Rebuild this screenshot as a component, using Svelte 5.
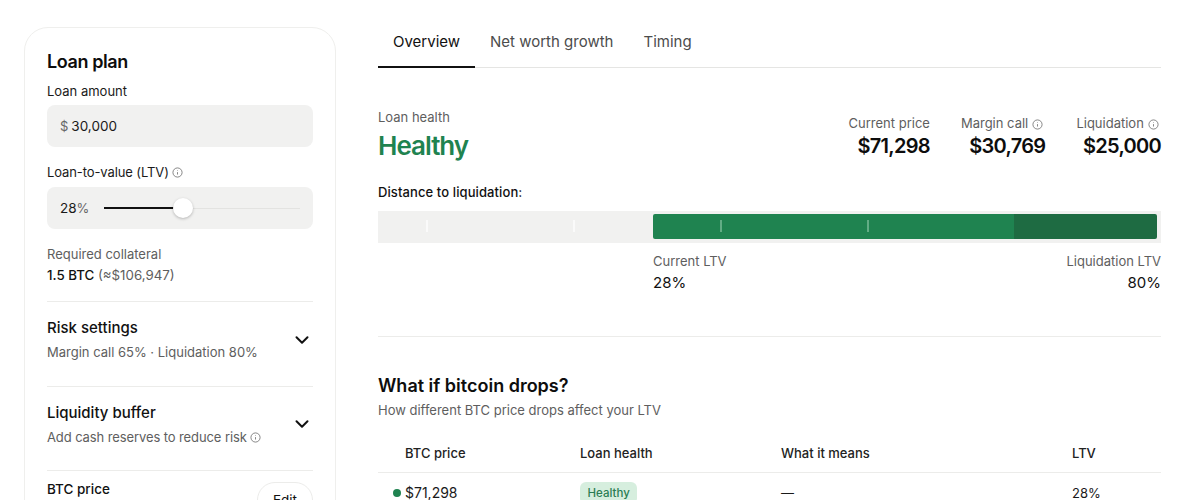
<script>
  const tabs = ["Overview", "Net worth growth", "Timing"];
  const stats = [
    { label: "Current price", value: "$71,298", info: false },
    { label: "Margin call", value: "$30,769", info: true },
    { label: "Liquidation", value: "$25,000", info: true },
  ];
</script>

{#snippet info(size)}
  <svg class="info" width={size} height={size} viewBox="0 0 12 12" fill="none" stroke="currentColor">
    <circle cx="6" cy="6" r="5" stroke-width="0.9" />
    <path d="M6 5.6v2.6M6 3.7v.6" stroke-width="0.9" />
  </svg>
{/snippet}

{#snippet chevron()}
  <svg class="chev" width="16" height="16" viewBox="0 0 16 16" fill="none">
    <path d="M2.5 5.2 8 10.7l5.5-5.5" stroke="#111" stroke-width="2" stroke-linecap="round" stroke-linejoin="round" />
  </svg>
{/snippet}

<div class="page">
  <aside class="card">
    <h2>Loan plan</h2>
    <div class="label first">Loan amount</div>
    <div class="field"><span class="unit">$</span> 30,000</div>

    <div class="label ltv">Loan-to-value (LTV) {@render info(11)}</div>
    <div class="field slider">
      <span class="pct">28<span class="unit">%</span></span>
      <div class="track">
        <div class="fill"></div>
        <div class="thumb"></div>
      </div>
    </div>

    <div class="collateral">
      <div class="muted">Required collateral</div>
      <div class="amount"><b>1.5 BTC</b> <span class="muted">(≈$106,947)</span></div>
    </div>

    <div class="row">
      <div>
        <div class="row-title">Risk settings</div>
        <div class="muted">Margin call 65% · Liquidation 80%</div>
      </div>
      {@render chevron()}
    </div>
    <div class="row">
      <div>
        <div class="row-title">Liquidity buffer</div>
        <div class="muted tight">Add cash reserves to reduce risk {@render info(11)}</div>
      </div>
      {@render chevron()}
    </div>
    <div class="price-row">
      <b>BTC price</b>
      <button>Edit</button>
    </div>
  </aside>

  <main>
    <nav>
      {#each tabs as tab, i}
        <div class="tab" class:active={i === 0}>{tab}</div>
      {/each}
    </nav>

    <section class="health">
      <div>
        <div class="muted">Loan health</div>
        <div class="healthy">Healthy</div>
      </div>
      <div class="stats">
        {#each stats as s}
          <div class="stat">
            <div class="muted" class:has-info={s.info}>{s.label}{#if s.info}{" "}{@render info(11)}{/if}</div>
            <div class="stat-value">{s.value}</div>
          </div>
        {/each}
      </div>
    </section>

    <div class="distance">Distance to liquidation:</div>
    <div class="bar">
      <div class="bar-empty">
        <i style="left: 48px"></i>
        <i style="left: 195px"></i>
      </div>
      <div class="bar-safe">
        <i style="left: 67px"></i>
        <i style="left: 214px"></i>
      </div>
      <div class="bar-risk"></div>
    </div>
    <div class="bar-labels">
      <div class="spacer"></div>
      <div class="bar-label">
        <div class="muted">Current LTV</div>
        <div class="bar-val">28%</div>
      </div>
      <div class="bar-label right">
        <div class="muted">Liquidation LTV</div>
        <div class="bar-val">80%</div>
      </div>
    </div>

    <hr />

    <h3>What if bitcoin drops?</h3>
    <div class="muted sub">How different BTC price drops affect your LTV</div>

    <div class="table">
      <div class="thead">
        <div class="c1">BTC price</div>
        <div class="c2">Loan health</div>
        <div class="c3">What it means</div>
        <div class="c4">LTV</div>
      </div>
      <div class="tbody">
        <div class="c1 price"><span class="dot"></span>$71,298</div>
        <div class="c2"><span class="badge">Healthy</span></div>
        <div class="c3">—</div>
        <div class="c4">28%</div>
      </div>
    </div>
  </main>
</div>

<style>
  :global(body) {
    margin: 0;
    background: #fff;
    overflow: hidden;
  }

  .page {
    display: flex;
    align-items: flex-start;
    height: 500px;
    overflow: hidden;
    padding: 27px 39px 0 24px;
    box-sizing: border-box;
    font-family: Inter, "Liberation Sans", sans-serif;
    font-size: 13px;
    line-height: 20px;
    color: #1a1a1a;
  }

  .card {
    width: 312px;
    flex: none;
    box-sizing: border-box;
    padding: 23px 22px 24px;
    margin-right: 42px;
    border: 1px solid #efefed;
    border-radius: 24px;
  }

  h2 {
    margin: 0;
    font-size: 18px;
    line-height: 22px;
    font-weight: 600;
    letter-spacing: -0.4px;
    color: #0d0d0d;
  }

  .label {
    display: flex;
    align-items: center;
    gap: 3px;
  }

  .label.first {
    margin-top: 8px;
  }

  .label.ltv {
    margin-top: 15px;
    letter-spacing: -0.1px;
  }

  .field {
    display: flex;
    align-items: center;
    gap: 3px;
    height: 42px;
    margin-top: 4px;
    padding: 0 13px;
    background: #f1f1f0;
    border-radius: 8px;
    font-size: 13.5px;
  }

  .unit {
    color: #666;
    font-size: 13px;
  }

  .slider {
    gap: 14px;
    margin-top: 5px;
  }

  .pct {
    font-size: 13.5px;
    width: 30px;
  }

  .track {
    position: relative;
    flex: 1;
    height: 1px;
    background: #e3e3e1;
  }

  .fill {
    width: 70px;
    height: 2px;
    margin-top: -1px;
    background: #111;
  }

  .thumb {
    position: absolute;
    left: 69px;
    top: -10px;
    width: 20px;
    height: 20px;
    border-radius: 50%;
    background: #fff;
    box-shadow: 0 1px 3px rgba(0, 0, 0, 0.25);
  }

  .muted {
    color: #5e5e5e;
  }

  .tight {
    letter-spacing: -0.1px;
  }

  .info {
    color: #6e6e6e;
    vertical-align: -1.5px;
    flex: none;
  }

  .collateral {
    margin-top: 15px;
    padding-bottom: 16px;
  }

  .amount {
    margin-top: 1px;
    font-size: 13.3px;
  }

  .amount b,
  .price-row b {
    font-weight: 500;
    color: #111;
  }

  .price-row b {
    font-size: 13.5px;
  }

  .row {
    display: flex;
    align-items: center;
    justify-content: space-between;
    padding: 15px 3px 23px 0;
    min-height: 84.5px;
    box-sizing: border-box;
    border-top: 1px solid #ececea;
  }

  .row-title {
    font-size: 15px;
    font-weight: 500;
    line-height: 22px;
    margin-bottom: 3px;
    color: #111;
  }

  .price-row {
    display: flex;
    justify-content: space-between;
    align-items: flex-start;
    border-top: 1px solid #ececea;
    padding-top: 8px;
  }

  button {
    height: 36px;
    width: 56px;
    margin-top: 3px;
    border: 1px solid #ececea;
    border-radius: 18px;
    background: #fff;
    font: inherit;
    font-size: 13.5px;
    color: #111;
  }

  main {
    flex: 1;
    min-width: 0;
  }

  nav {
    display: flex;
    margin-top: -27px;
    height: 68px;
    box-sizing: border-box;
    border-bottom: 1px solid #e5e5e3;
  }

  .tab {
    padding: 32px 15px 0;
    font-size: 15px;
    line-height: 20px;
    color: #4c4c4c;
    height: 68px;
    box-sizing: border-box;
  }

  .tab.active {
    color: #111;
    border-bottom: 2px solid #111;
  }

  .health {
    display: flex;
    justify-content: space-between;
    margin-top: 39px;
  }

  .healthy {
    margin-top: 2px;
    font-size: 26px;
    line-height: 34px;
    font-weight: 600;
    letter-spacing: -1px;
    color: #1f8350;
  }

  .stats {
    display: flex;
    gap: 31px;
    margin-top: 6px;
  }

  .stat {
    text-align: right;
  }

  .has-info {
    padding-right: 2.5px;
  }

  .stat-value {
    font-size: 20px;
    line-height: 26px;
    font-weight: 600;
    letter-spacing: -0.7px;
    color: #0d0d0d;
  }

  .distance {
    margin-top: 19px;
    font-weight: 500;
    letter-spacing: 0.1px;
    color: #111;
  }

  .bar {
    display: flex;
    height: 32px;
    margin-top: 9px;
    padding: 3px 4px 4px 0;
    box-sizing: border-box;
    background: #f1f1f0;
  }

  .bar i {
    position: absolute;
    top: 6px;
    width: 1.5px;
    height: 12px;
  }

  .bar-empty {
    position: relative;
    width: 275px;
    flex: none;
  }

  .bar-empty i {
    background: #fafafa;
  }

  .bar-safe {
    position: relative;
    width: 361px;
    flex: none;
    background: #1f8350;
    border-radius: 2px 0 0 2px;
  }

  .bar-safe i {
    background: #62ad85;
  }

  .bar-risk {
    flex: 1;
    background: #1e6b42;
    border-radius: 0 2px 2px 0;
  }

  .bar-labels {
    display: flex;
    justify-content: space-between;
    margin-top: 8px;
  }

  .spacer {
    width: 275px;
    flex: none;
  }

  .bar-label {
    flex: 1;
  }

  .bar-label.right {
    text-align: right;
  }

  .bar-val {
    margin-top: 2px;
    font-size: 15px;
    line-height: 20px;
    color: #111;
  }

  hr {
    height: 1px;
    border: 0;
    margin: 43px 0 0;
    background: #ececea;
  }

  h3 {
    margin: 36px 0 0;
    font-size: 18px;
    line-height: 26px;
    font-weight: 600;
    color: #0d0d0d;
  }

  .sub {
    margin-top: 1px;
  }

  .table {
    margin-top: 23px;
  }

  .thead,
  .tbody {
    display: grid;
    grid-template-columns: 202px 201px 291px 1fr;
  }

  .thead {
    padding-bottom: 9px;
    font-weight: 500;
    color: #222;
    border-bottom: 1px solid #ececea;
  }

  .c1 {
    padding-left: 27px;
    position: relative;
  }

  .tbody {
    padding-top: 9px;
    align-items: center;
  }

  .price {
    font-size: 14px;
  }

  .dot {
    position: absolute;
    left: 15px;
    top: 6px;
    width: 8px;
    height: 8px;
    border-radius: 50%;
    background: #1f8350;
  }

  .badge {
    display: inline-block;
    padding: 1px 7.5px;
    font-size: 11.5px;
    font-weight: 500;
    line-height: 20px;
    color: #2a7d53;
    background: #d6eede;
    border-radius: 6px;
  }
</style>
